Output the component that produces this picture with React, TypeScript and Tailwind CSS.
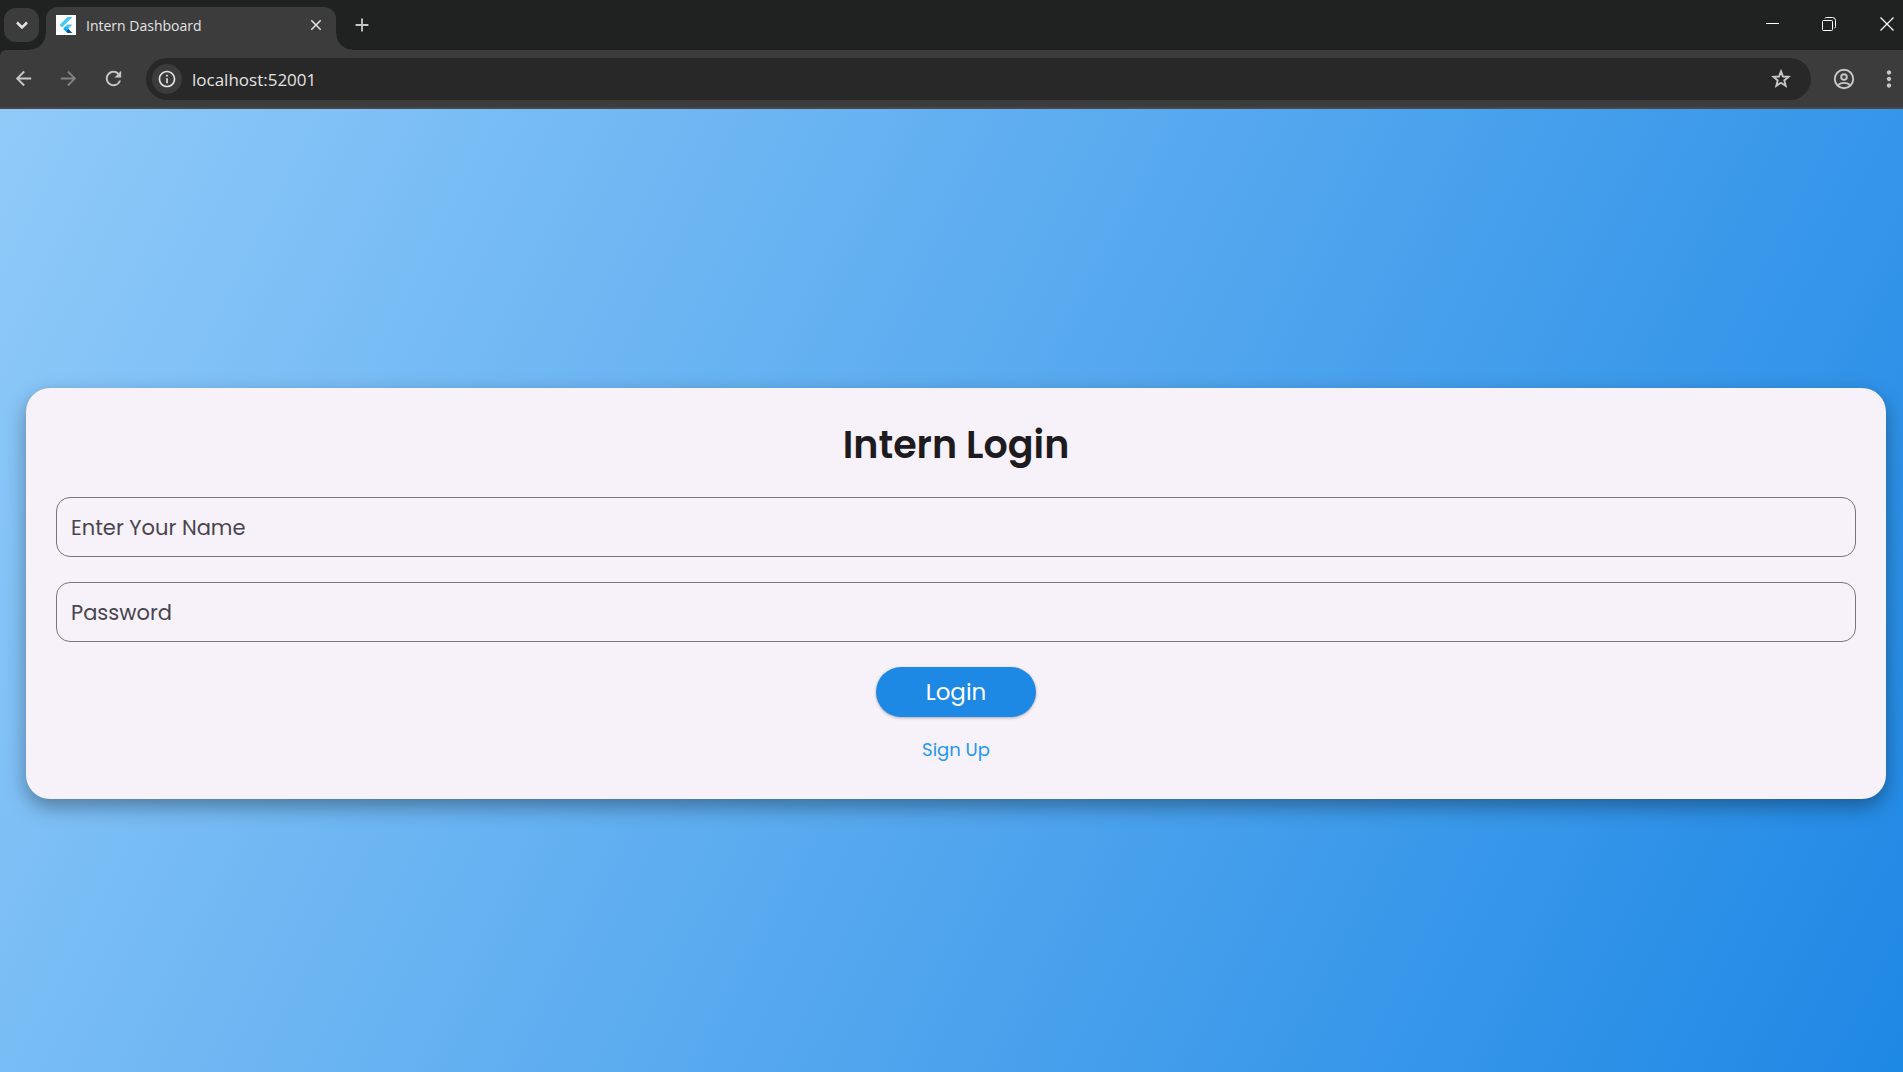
import type { ReactNode } from "react";
import { ChevronDown } from "lucide-react";
import { MdArrowBack, MdArrowForward, MdRefresh, MdMoreVert, MdClose, MdAdd, MdInfoOutline } from "react-icons/md";

function FlutterLogo() {
  return (
    <span className="flex size-5 shrink-0 items-center justify-center bg-white">
      <svg viewBox="0 0 24 24" className="size-4" aria-hidden="true">
        <path d="M14.3 0 2.3 12l3.7 3.7L21.7 0z" fill="#47c5fb" />
        <path d="M14.3 11.1 7.9 17.5l3.7 3.7 10.1-10.1z" fill="#47c5fb" />
        <path d="m11.6 21.2 2.7 2.8h7.4l-6.4-6.5z" fill="#00569e" />
        <path d="m7.9 17.5 3.7-3.7 3.7 3.7-3.7 3.7z" fill="#00b5f8" />
      </svg>
    </span>
  );
}

function ToolButton({ label, className = "", children }: { label: string; className?: string; children: ReactNode }) {
  return (
    <button type="button" aria-label={label} className={`flex h-8 w-[45px] shrink-0 items-center justify-center text-[23px] text-[#c7c7c7] ${className}`}>
      {children}
    </button>
  );
}

function TabStrip() {
  return (
    <div className="flex h-[50px] items-end overflow-hidden pl-1">
      <button type="button" aria-label="Search tabs" className="mb-2 flex h-[34px] w-[35px] shrink-0 items-center justify-center rounded-xl bg-[#3c3c3c] text-[#e3e3e3]">
        <ChevronDown size={20} strokeWidth={3} strokeLinecap="butt" strokeLinejoin="miter" />
      </button>
      <div className="relative ml-[7px] flex h-[43px] w-[290px] shrink-0 items-center rounded-t-xl bg-[#3c3c3c] px-2.5 pb-2">
        <span className="absolute bottom-0 -left-4 size-4 bg-[radial-gradient(circle_at_0_0,transparent_15px,#3c3c3c_16px)]" />
        <span className="absolute -right-4 bottom-0 size-4 bg-[radial-gradient(circle_at_100%_0,transparent_15px,#3c3c3c_16px)]" />
        <FlutterLogo />
        <span className="ml-2.5 flex-1 pt-0.5 text-sm text-[#e3e3e3]">Intern Dashboard</span>
        <button type="button" aria-label="Close tab" className="flex size-5 items-center justify-center text-lg text-[#e3e3e3]">
          <MdClose />
        </button>
      </div>
      <button type="button" aria-label="New tab" className="mb-2.5 ml-[11px] flex size-[30px] shrink-0 items-center justify-center text-[22px] text-[#c7c7c7]">
        <MdAdd />
      </button>
      <div className="mb-2.5 ml-auto flex shrink-0 text-white">
        <button type="button" aria-label="Minimize" className="flex h-8 w-14 items-center justify-center">
          <svg viewBox="0 0 14 14" className="size-3.5" fill="none" stroke="currentColor" aria-hidden="true"><path d="M0 6.5h13" /></svg>
        </button>
        <button type="button" aria-label="Restore" className="flex h-8 w-14 items-center justify-center">
          <svg viewBox="0 0 14 14" className="size-3.5" fill="none" stroke="currentColor" aria-hidden="true">
            <rect x=".5" y="3.5" width="10" height="10" rx="1" />
            <path d="M3 1.5Q3.3.5 4.5.5H10.5Q13.5.5 13.5 3.5V9.5Q13.5 11 12.5 11" />
          </svg>
        </button>
        <button type="button" aria-label="Close window" className="flex h-8 w-[46px] items-center justify-center pl-3.5">
          <svg viewBox="0 0 14 14" className="size-3.5" fill="none" stroke="currentColor" strokeWidth="1.2" aria-hidden="true"><path d="m.5.5 13 13M13.5.5l-13 13" /></svg>
        </button>
      </div>
    </div>
  );
}

function Toolbar() {
  return (
    <div className="flex h-[59px] items-center rounded-tl-md border-b-2 border-[#484848] bg-[#3c3c3c] pl-px">
      <ToolButton label="Back"><MdArrowBack /></ToolButton>
      <ToolButton label="Forward" className="opacity-50"><MdArrowForward /></ToolButton>
      <ToolButton label="Reload"><MdRefresh /></ToolButton>
      <div className="ml-2.5 flex h-[42px] min-w-0 flex-1 items-center rounded-full bg-[#282828] pl-1.5">
        <button type="button" aria-label="Site information" className="flex size-[30px] shrink-0 items-center justify-center rounded-full bg-[#3c3c3c] text-xl text-[#e3e3e3]">
          <MdInfoOutline />
        </button>
        <input aria-label="Address" defaultValue="localhost:52001" className="ml-2.5 min-w-0 flex-1 bg-transparent pt-0.5 text-[17px] text-[#e3e3e3] outline-none" />
        <button type="button" aria-label="Bookmark this tab" className="mr-[18px] shrink-0 text-[#c7c7c7]">
          <svg viewBox="0 0 24 24" className="size-6" fill="none" stroke="currentColor" strokeWidth="1.9" aria-hidden="true">
            <path d="m12 4.4 2 5.1 5.500.4-4.200 3.500 1.400 5.400-4.700-3-4.700 3 1.400-5.400-4.200-3.500 5.500-.4z" />
          </svg>
        </button>
      </div>
      <ToolButton label="Profile" className="ml-2.5">
        <svg viewBox="0 0 22 22" className="size-[22px]" fill="none" stroke="currentColor" strokeWidth="1.9" aria-hidden="true">
          <circle cx="11" cy="11" r="9.2" />
          <circle cx="11" cy="9" r="2.8" />
          <path d="M4.5 17.2Q11 12.6 17.5 17.2" />
        </svg>
      </ToolButton>
      <ToolButton label="Menu" className="-mr-2"><MdMoreVert size={26} /></ToolButton>
    </div>
  );
}

function Field({ id, label, type }: { id: string; label: string; type: string }) {
  return (
    <div className="relative">
      <input
        id={id}
        type={type}
        placeholder=" "
        className="peer block h-[60px] w-full rounded-[14px] border border-[#79747e] bg-transparent px-3.5 text-[21px] text-[#1d1b20]"
      />
      <label
        htmlFor={id}
        className="pointer-events-none absolute inset-y-0 left-[15px] flex items-center pt-0.5 text-[21px] text-[#49454f] peer-[:not(:placeholder-shown)]:hidden"
      >
        {label}
      </label>
    </div>
  );
}

export default function App() {
  return (
    <div className="flex min-h-screen flex-col overflow-hidden font-['Open_Sans',sans-serif]">
      <header className="bg-[#202221]">
        <TabStrip />
        <Toolbar />
      </header>
      <main className="flex flex-1 items-center bg-[linear-gradient(117deg,#90caf9,#1e88e5)] pt-1.5 pr-[17px] pl-[26px] font-['Poppins',sans-serif]">
        <form className="flex w-full flex-col items-center rounded-3xl bg-[#f7f2fa] p-[30px] shadow-[0_8px_20px_rgba(0,0,0,0.35)]" onSubmit={(e) => e.preventDefault()}>
          <h1 className="text-[38px] leading-[54px] font-semibold text-[#1d1b20]">Intern Login</h1>
          <div className="mt-[25px] flex w-full flex-col gap-[25px]">
            <Field id="name" label="Enter Your Name" type="text" />
            <Field id="password" label="Password" type="password" />
          </div>
          <button type="submit" className="mt-[25px] h-[50px] w-40 rounded-full bg-[#1e88e5] text-[23px] text-white shadow-[0_1px_3px_rgba(0,0,0,0.3)]">Login</button>
          <a href="#signup" className="mt-4 mb-0.5 text-lg leading-[34px] text-[#2196f3]">Sign Up</a>
        </form>
      </main>
    </div>
  );
}
